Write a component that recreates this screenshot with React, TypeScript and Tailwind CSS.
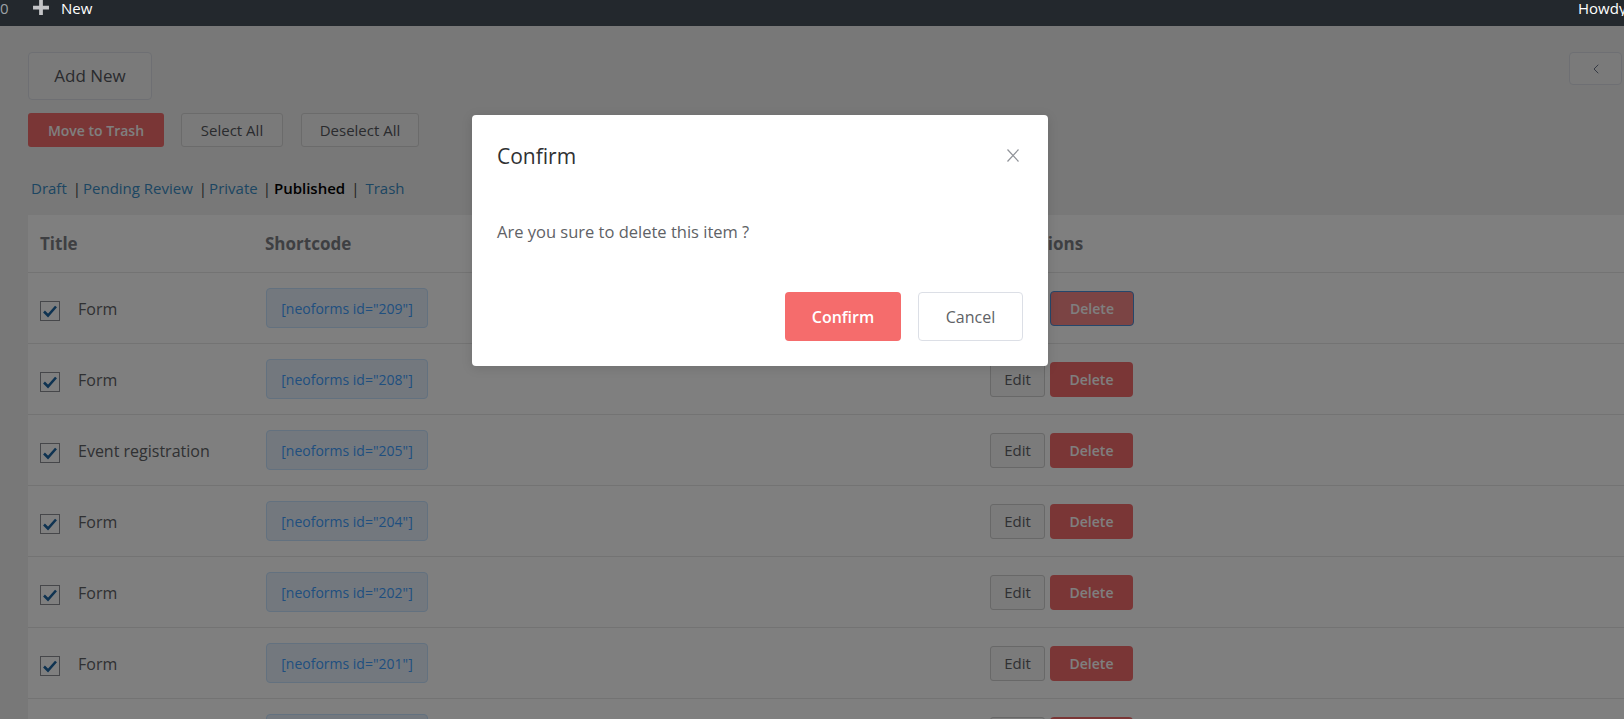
import React from "react";
import { ChevronLeft } from "lucide-react";

type Row = {
  title: string;
  id: number;
};

const rows: Row[] = [
  { title: "Form", id: 209 },
  { title: "Form", id: 208 },
  { title: "Event registration", id: 205 },
  { title: "Form", id: 204 },
  { title: "Form", id: 202 },
  { title: "Form", id: 201 },
  { title: "Form", id: 200 },
];

const Checkbox = () => (
  <div className="w-[20px] h-[20px] mt-[6px] border border-[#8c8f94] bg-white flex items-center justify-center shrink-0">
    <svg width="16" height="14" viewBox="0 0 16 14">
      <path d="M2 7.5 L6 11.5 L14 2.5" fill="none" stroke="#1e66a3" strokeWidth="2.6" />
    </svg>
  </div>
);

const TableRow = ({ row, focused }: { row: Row; focused: boolean }) => (
  <div className="grid grid-cols-[237px_725px_1fr] h-[71px] border-b border-[#e6e6e6] items-center">
    <div className="pl-3 flex items-center">
      <Checkbox />
      <span className="ml-[18px] mt-[2px] text-[16px] text-[#606266]">{row.title}</span>
    </div>
    <div>
      <div className="w-[162px] h-[40px] ml-px flex items-center justify-center rounded-[4px] border border-[#c6e2ff] bg-[#e6f1fc] text-[14px] text-[#409eff]">
        [neoforms id="{row.id}"]
      </div>
    </div>
    <div className="flex items-center">
      <div className="w-[55px] h-[35px] flex items-center justify-center rounded-[3px] border border-[#d0d0d0] bg-[#f6f6f6] text-[15px] text-[#606266]">
        Edit
      </div>
      <div
        className={
          focused
            ? "ml-[5px] w-[84px] h-[35px] flex items-center justify-center rounded-[4px] border border-[#4a8fd6] bg-[#f78989] text-[14px] font-semibold text-white"
            : "ml-[5px] w-[83px] h-[35px] flex items-center justify-center rounded-[4px] bg-[#f56c6c] text-[14px] font-semibold text-white"
        }
      >
        Delete
      </div>
    </div>
  </div>
);

const App = () => {
  return (
    <div className="relative h-[719px] overflow-hidden bg-[#f1f1f1] font-['Open_Sans',sans-serif]">
      {/* admin bar */}
      <div className="relative z-50 h-[26px] bg-[#23282d] flex items-start text-[15px] leading-[16px]">
        <span className="w-[9px] overflow-hidden text-[#9ca1a6]">0</span>
        <svg className="ml-[24px]" width="16" height="15" viewBox="0 0 17 16">
          <path d="M6.5 0 H10.5 V6 H17 V10 H10.5 V16 H6.5 V10 H0 V6 H6.5 Z" fill="#c3c4c7" />
        </svg>
        <span className="ml-[12px] text-white">New</span>
        <span className="ml-auto w-[46px] overflow-hidden whitespace-nowrap text-white">
          Howdy, admin
        </span>
      </div>

      <div className="pl-[28px]">
        <div className="flex items-start justify-between pt-[26px] pr-[2px]">
          <div className="w-[124px] h-[48px] flex items-center justify-center rounded-[4px] border border-[#dcdfe6] bg-[#f4f4f5] text-[17px] font-medium text-[#55575c]">
            Add New
          </div>
          <div className="w-[53px] h-[33px] flex items-center justify-center rounded-[4px] border border-[#dcdfe6] bg-[#f4f4f5]">
            <ChevronLeft size={16} strokeWidth={1.4} color="#606a80" />
          </div>
        </div>

        <div className="flex items-center mt-[13px]">
          <div className="w-[136px] h-[34px] flex items-center justify-center rounded-[3px] bg-[#f56c6c] text-[14px] font-semibold text-white">
            Move to Trash
          </div>
          <div className="ml-[17px] w-[102px] h-[34px] flex items-center justify-center rounded-[3px] border border-[#d6d6d6] bg-[#f4f4f5] text-[15px] text-[#55575c]">
            Select All
          </div>
          <div className="ml-[18px] w-[118px] h-[34px] flex items-center justify-center rounded-[3px] border border-[#d6d6d6] bg-[#f4f4f5] text-[15px] text-[#55575c]">
            Deselect All
          </div>
        </div>

        <div className="flex items-center mt-[31px] pl-[3px] h-[20px] text-[15px]">
          <span className="text-[#3a8cc4]">Draft</span>
          <span className="ml-[6px] mr-[2px] text-[#444]">|</span>
          <span className="text-[#3a8cc4]">Pending Review</span>
          <span className="ml-[6px] mr-[2px] text-[#444]">|</span>
          <span className="text-[#3a8cc4]">Private</span>
          <span className="ml-[5px] mr-[3px] text-[#444]">|</span>
          <span className="font-semibold text-black">Published</span>
          <span className="ml-[6px] mr-[6px] text-[#444]">|</span>
          <span className="text-[#3a8cc4]">Trash</span>
        </div>

        <div className="mt-[17px] bg-white">
          <div className="grid grid-cols-[237px_725px_1fr] h-[58px] border-b border-[#e6e6e6] items-center text-[17px] font-bold text-[#7d7f85]">
            <div className="pl-3">Title</div>
            <div>Shortcode</div>
            <div className="pl-[30px]">Actions</div>
          </div>
          {rows.map((row, index) => (
            <TableRow key={index} row={row} focused={index === 0} />
          ))}
        </div>
      </div>

      {/* overlay */}
      <div className="absolute inset-0 z-40 bg-black/50" />

      {/* confirm dialog */}
      <div className="absolute z-50 left-[472px] top-[115px] w-[576px] h-[251px] rounded-[4px] bg-white shadow-[0_2px_12px_rgba(0,0,0,0.12)] flex flex-col">
        <div className="flex items-center justify-between pt-[27px] pl-[25px] pr-[29px] h-[55px]">
          <span className="text-[21px] leading-[28px] text-[#303133]">Confirm</span>
          <svg width="12" height="13" viewBox="0 0 12 13" className="-mt-[2px]">
            <path d="M0.5 0.5 L11.5 12.5 M11.5 0.5 L0.5 12.5" stroke="#909399" strokeWidth="1.2" fill="none" />
          </svg>
        </div>
        <div className="pt-[51px] pl-[25px] text-[16.5px] leading-[22px] text-[#606266]">
          Are you sure to delete this item ?
        </div>
        <div className="flex justify-end pt-[49px] pr-[25px]">
          <div className="w-[116px] h-[49px] flex items-center justify-center rounded-[4px] bg-[#f56c6c] text-[16px] font-semibold text-white">
            Confirm
          </div>
          <div className="ml-[17px] w-[105px] h-[49px] flex items-center justify-center rounded-[4px] border border-[#dcdfe6] bg-white text-[16px] text-[#606266]">
            Cancel
          </div>
        </div>
      </div>
    </div>
  );
};

export default App;
